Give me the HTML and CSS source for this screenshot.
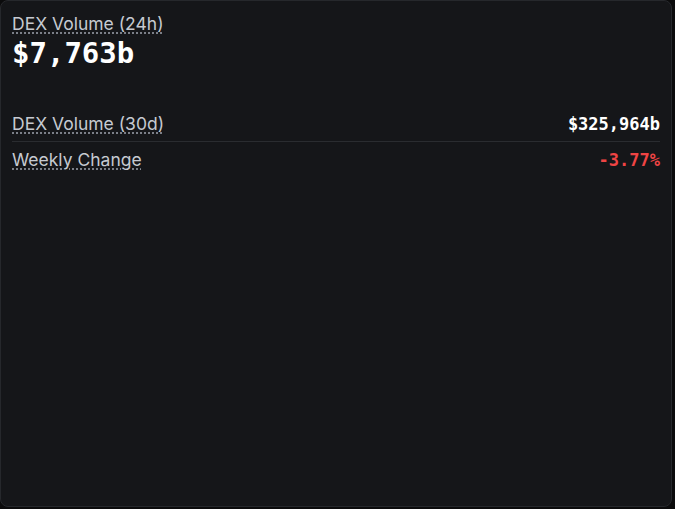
FILE: index.html
```html
<!DOCTYPE html>
<html lang="en">
<head>
    <meta charset="UTF-8">
    <meta name="viewport" content="width=device-width, initial-scale=1.0">
    <title>DEX Volume</title>
    <link rel="stylesheet" href="styles.css">
</head>
<body>
    <div class="card">
        <div class="headline">
            <span class="label">DEX Volume (24h)</span>
            <div class="big-value">$7,763b</div>
        </div>

        <div class="stats">
            <div class="stat-row">
                <span class="label">DEX Volume (30d)</span>
                <span class="value">$325,964b</span>
            </div>
            <div class="stat-row">
                <span class="label">Weekly Change</span>
                <span class="value negative">-3.77%</span>
            </div>
        </div>
    </div>
</body>
</html>
```

FILE: styles.css
```css
body {
    margin: 0;
    background-color: #0b0b0c;
    font-family: Inter, "Liberation Sans", Arial, sans-serif;
}
.card {
    box-sizing: border-box;
    width: 672px;
    height: 507px;
    padding: 11px 11px;
    background-color: #151619;
    border: 1px solid #26282c;
    border-radius: 8px;
}
.label {
    color: #c6cad1;
    font-size: 17.5px;
    line-height: 24px;
    text-decoration: underline dotted #8a8f98;
    text-underline-offset: 3px;
}
.big-value {
    color: #ffffff;
    font-family: "DejaVu Sans Mono", "Liberation Mono", monospace;
    font-weight: bold;
    font-size: 29px;
    line-height: 34px;
}
.stats {
    margin-top: 36px;
}
.stat-row {
    display: flex;
    justify-content: space-between;
    align-items: center;
    padding: 6px 0 5px;
}
.stat-row + .stat-row {
    border-top: 1px solid #2a2c30;
}
.value {
    color: #ffffff;
    font-family: "DejaVu Sans Mono", "Liberation Mono", monospace;
    font-weight: bold;
    font-size: 17px;
}
.negative {
    color: #ef4444;
}
```
